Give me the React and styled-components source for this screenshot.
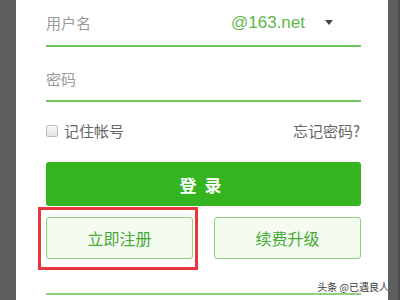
import React from "react";
import styled, { createGlobalStyle } from "styled-components";

const Global = createGlobalStyle`
  html, body { margin: 0; padding: 0; }
  body { font-family: "Noto Sans CJK SC", "Liberation Sans", sans-serif; }
`;

const Page = styled.div`
  position: relative;
  width: 400px;
  height: 300px;
  overflow: hidden;
  display: flex;
  background: #5e5e5e;
  padding: 0 12px 0 16px;
  box-sizing: border-box;
  box-shadow: inset -2px 0 0 #4a4a4a;
`;

const Panel = styled.div`
  flex: 1;
  background: #fff;
  padding: 0 27px 0 30px;
  display: flex;
  flex-direction: column;
`;

const Field = styled.div`
  height: ${(p) => p.h}px;
  border-bottom: 2px solid #6cc35c;
  display: flex;
  align-items: center;
  padding-top: ${(p) => p.pt || 0}px;
  box-sizing: content-box;
`;

const Label = styled.span`
  flex: 1;
  font-size: 15px;
  color: #9a9a9a;
`;

const Domain = styled.span`
  font-family: "Liberation Sans", Arial, sans-serif;
  font-size: 17px;
  color: #5cb84a;
  margin-right: 20px;
`;

const Caret = styled.span`
  width: 0;
  height: 0;
  border-left: 4px solid transparent;
  border-right: 4px solid transparent;
  border-top: 5px solid #444;
  margin-right: 28px;
`;

const OptionRow = styled.div`
  height: 57px;
  display: flex;
  align-items: center;
  justify-content: space-between;
  font-size: 15px;
  color: #666;
`;

const Remember = styled.label`
  display: flex;
  align-items: center;
  gap: 6px;
`;

const Box = styled.span`
  width: 10px;
  height: 10px;
  border: 1px solid #bbb;
  border-radius: 2px;
  background: linear-gradient(#fafafa, #e4e4e4);
`;

const Forgot = styled.span`
  margin-right: 1px;
`;

const LoginButton = styled.button`
  margin-top: 3px;
  height: 44px;
  border: none;
  border-radius: 3px;
  background: #34b41e;
  color: #fff;
  font-family: inherit;
  font-size: 17px;
  font-weight: bold;
  letter-spacing: 8px;
  padding-left: 8px;
`;

const ButtonRow = styled.div`
  margin-top: 11px;
  display: grid;
  grid-template-columns: 147px 147px;
  justify-content: space-between;
`;

const Holder = styled.div`
  position: relative;
`;

const Highlight = styled.div`
  position: absolute;
  top: -10px;
  left: -8px;
  right: -5px;
  bottom: -11px;
  border: 3px solid #e8363c;
  pointer-events: none;
`;

const GhostButton = styled.button`
  width: 100%;
  height: 42px;
  border: 1px solid #8fd080;
  border-radius: 3px;
  background: #f4fcf1;
  color: #48a836;
  font-family: inherit;
  font-size: 16px;
`;

const BottomLine = styled.div`
  margin-top: 34px;
  border-top: 2px solid #8fd080;
`;

const Watermark = styled.div`
  position: absolute;
  right: 11px;
  bottom: 6px;
  font-size: 10px;
  line-height: 14px;
  color: #3a3a3a;
  text-shadow: 0 0 2px #fff;
`;

export default function App() {
  return (
    <Page>
      <Global />
      <Panel>
        <Field h={45}>
          <Label>用户名</Label>
          <Domain>@163.net</Domain>
          <Caret />
        </Field>
        <Field h={43} pt={10}>
          <Label>密码</Label>
        </Field>
        <OptionRow>
          <Remember>
            <Box />
            记住帐号
          </Remember>
          <Forgot>忘记密码?</Forgot>
        </OptionRow>
        <LoginButton>登录</LoginButton>
        <ButtonRow>
          <Holder>
            <GhostButton>立即注册</GhostButton>
            <Highlight />
          </Holder>
          <GhostButton>续费升级</GhostButton>
        </ButtonRow>
        <BottomLine />
      </Panel>
      <Watermark>头条 @已遇良人</Watermark>
    </Page>
  );
}
